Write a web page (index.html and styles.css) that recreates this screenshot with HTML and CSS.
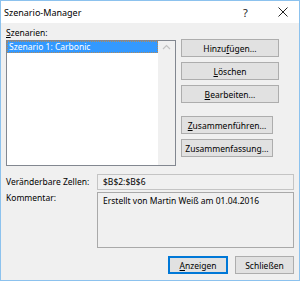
FILE: index.html
```html
<!DOCTYPE html>
<html lang="de">
<head>
<meta charset="utf-8">
<link rel="stylesheet" href="styles.css">
</head>
<body>
<div class="dialog">
  <div class="titlebar">
    <span class="title">Szenario-Manager</span>
    <span class="help">?</span>
    <svg class="close" width="10" height="10" viewBox="0 0 10 10"><path d="M0.5 0.5L9.5 9.5M9.5 0.5L0.5 9.5" stroke="#222" stroke-width="1" fill="none"/></svg>
  </div>
  <div class="content">
    <div class="label-top"><u>S</u>zenarien:</div>
    <div class="main">
      <div class="listbox">
        <div class="items">
          <div class="item selected">Szenario 1: Carbonic</div>
        </div>
        <div class="scrollbar">
          <svg width="9" height="6" viewBox="0 0 9 6"><path d="M1 5L4.5 1.5L8 5" stroke="#c2c2c2" stroke-width="1.2" fill="none"/></svg>
        </div>
      </div>
      <div class="side">
        <button class="btn">Hinzu<u>f</u>ügen...</button>
        <button class="btn"><u>L</u>öschen</button>
        <button class="btn"><u>B</u>earbeiten...</button>
        <button class="btn narrow gap"><u>Z</u>usammenführen...</button>
        <button class="btn narrow">Zusammenfassung...</button>
      </div>
    </div>
    <div class="row cells">
      <span class="lbl">Veränderbare Zellen:</span>
      <div class="field">$B$2:$B$6</div>
    </div>
    <div class="row comment">
      <span class="lbl">Kommentar:</span>
      <div class="field area">Erstellt von Martin Weiß am 01.04.2016</div>
    </div>
    <div class="footer">
      <button class="btn default"><u>A</u>nzeigen</button>
      <button class="btn close-btn">Schließen</button>
    </div>
  </div>
</div>
</body>
</html>
```
FILE: styles.css
```css
* { box-sizing: border-box; }
html, body { margin: 0; padding: 0; }
body {
  width: 300px;
  height: 281px;
  font-family: "Noto Sans", "Open Sans", sans-serif;
  font-size: 8.5px;
  color: #000;
  background: #fff;
}
.dialog {
  width: 300px;
  height: 281px;
  border: 1px solid #8cc2ee;
  background: #f0f0f0;
  display: flex;
  flex-direction: column;
}
.titlebar {
  height: 22px;
  background: #fff;
  display: flex;
  align-items: center;
  padding-left: 3px;
  flex: none;
}
.title { font-size: 9px; flex: 1; }
.help { font-size: 11px; color: #222; width: 10px; margin-right: 25px; }
.close { margin-right: 11px; }
.content {
  padding: 4px 5px 0 5px;
  display: flex;
  flex-direction: column;
}
.label-top { height: 12px; line-height: 12px; margin-bottom: 1px; }
.main { display: flex; gap: 5px; }
.listbox {
  width: 170px;
  height: 126px;
  border: 1px solid #828790;
  background: #fff;
  display: flex;
}
.items { flex: 1; }
.item { height: 12px; line-height: 11px; padding-left: 2px; white-space: nowrap; }
.item.selected {
  background: #3399ff;
  color: #fff;
  outline: 1px dotted #b08a5a;
  outline-offset: -1px;
}
.scrollbar {
  width: 17px;
  background: #f0f0f0;
  display: flex;
  justify-content: center;
  padding-top: 3px;
}
.scrollbar svg { display: block; }
.side {
  display: flex;
  flex-direction: column;
  gap: 5px;
  margin-top: -1px;
}
.btn {
  font: inherit;
  color: #000;
  width: 98px;
  height: 18px;
  padding: 0;
  background: #e1e1e1;
  border: 1px solid #adadad;
  line-height: 15px;
  text-align: center;
}
.btn.narrow { width: 92px; }
.btn.gap { margin-top: 8px; }
.row { display: flex; }
.lbl { width: 91px; flex: none; }
.cells { margin-top: 8px; height: 16px; }
.cells .lbl { line-height: 16px; }
.field {
  width: 198px;
  height: 16px;
  border: 1px solid #c4c4c4;
  background: #f0f0f0;
  padding-left: 5px;
  line-height: 14px;
}
.comment { margin-top: 2px; }
.comment .lbl { line-height: 12px; }
.field.area {
  height: 56px;
  border-color: #a9a9a9;
  padding-top: 2px;
  line-height: 11px;
}
.footer {
  display: flex;
  justify-content: flex-end;
  gap: 7px;
  margin-top: 8px;
}
.footer .btn { width: 60px; }
.btn.default { border: 1px solid #0078d7; box-shadow: inset 0 0 0 1px #0078d7; }
.btn.close-btn { width: 59px; }
```
